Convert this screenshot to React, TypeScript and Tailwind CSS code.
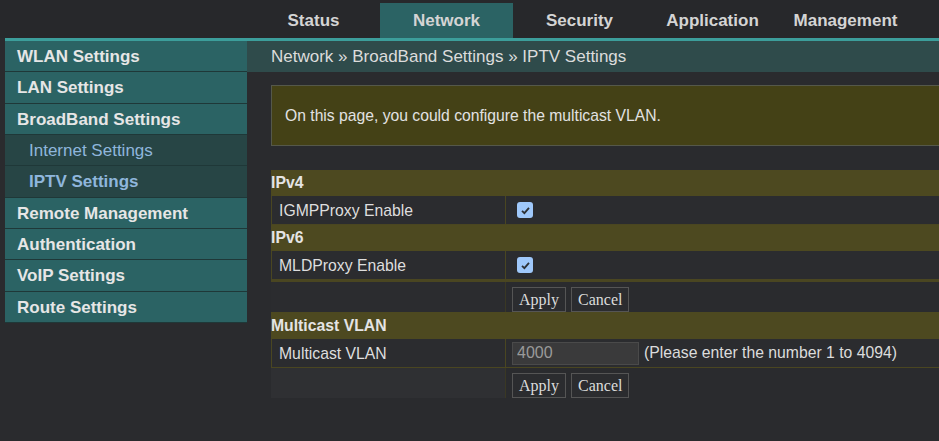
import React from "react";

const TABS = ["Status", "Network", "Security", "Application", "Management"];

const MENU = [
  { label: "WLAN Settings" },
  { label: "LAN Settings" },
  { label: "BroadBand Settings" },
  { label: "Internet Settings", sub: true },
  { label: "IPTV Settings", sub: true, active: true },
  { label: "Remote Management" },
  { label: "Authentication" },
  { label: "VoIP Settings" },
  { label: "Route Settings" },
];

function Check() {
  return (
    <span className="ml-[11px] flex h-[16px] w-[16px] items-center justify-center rounded-[3px] bg-[#9fc8fa]">
      <svg viewBox="0 0 12 12" className="h-[11px] w-[11px]">
        <path d="M2.2 6.4 L4.8 8.9 L9.8 3.2" fill="none" stroke="#2d3135" strokeWidth="2" />
      </svg>
    </span>
  );
}

function Buttons({ shade }: { shade?: boolean }) {
  return (
    <div className="flex h-[30px]">
      <div
        className={
          "w-[235px] border-r border-[#3a3824] " + (shade ? "bg-[#2f3033]" : "bg-[#2b2c2f]")
        }
      />
      <div className="flex items-start gap-[5px] pl-[6px] pt-[5px]">
        <button className="h-[25px] border border-[#555] bg-[#2b2c2f] px-[6px] font-['Liberation_Serif',serif] text-[16px] text-[#dcdcdc]">
          Apply
        </button>
        <button className="h-[25px] border border-[#555] bg-[#2b2c2f] px-[6px] font-['Liberation_Serif',serif] text-[16px] text-[#dcdcdc]">
          Cancel
        </button>
      </div>
    </div>
  );
}

function Head({ title, tall }: { title: string; tall?: boolean }) {
  return (
    <div
      className={
        "flex items-center bg-[#4d4920] text-[15.75px] font-bold text-[#e4e4e4] " +
        (tall ? "h-[27px]" : "h-[26px]")
      }
    >
      {title}
    </div>
  );
}

function Row({ label, children }: { label: string; children: React.ReactNode }) {
  return (
    <div className="flex h-[29px] border-x border-b border-[#4a4621] bg-[#2b2c2f]">
      <div className="flex w-[234px] items-center border-r border-[#4a4621] pl-[7px] pt-[2px] text-[15.75px] text-[#dedede]">
        {label}
      </div>
      <div className="flex flex-1 items-center">{children}</div>
    </div>
  );
}

export default function App() {
  return (
    <div className="h-[441px] w-[939px] overflow-hidden bg-[#2a2b2e] font-['Liberation_Sans',Arial,sans-serif]">
      <div className="flex h-[38px] pl-[247px] pt-[3px] bg-[#27282b]">
        {TABS.map((t) => (
          <div
            key={t}
            className={
              "flex w-[133px] shrink-0 items-center justify-center text-[17px] font-bold text-[#d4d4d4] " +
              (t === "Network" ? "bg-[#2b6364]" : "")
            }
          >
            {t}
          </div>
        ))}
      </div>
      <div className="ml-[5px] h-[3px] bg-[#3c9e9b]" />

      <div className="flex pl-[5px]">
        <aside className="w-[242px] shrink-0">
          {MENU.map((m) => (
            <div
              key={m.label}
              className={
                "flex h-[31.33px] items-center border-b border-[#1f3838] pt-[1px] text-[17px] " +
                (m.sub
                  ? "bg-[#274545] pl-[24px] text-[#8fb6dc] " + (m.active ? "font-bold" : "")
                  : "bg-[#2b6364] pl-[12px] font-bold text-[#e6e6e6]")
              }
            >
              {m.label}
            </div>
          ))}
        </aside>

        <main className="w-[740px] shrink-0">
          <div className="flex h-[31px] items-center bg-[#2f4b4b] pl-[24px] text-[17px] text-[#dcdcdc]">
            Network » BroadBand Settings » IPTV Settings
          </div>
          <div className="pl-[24px]">
            <div className="mt-[13px] flex h-[61px] items-center border border-[#55584a] bg-[#444116] pl-[13px] text-[15.7px] text-[#e2e2e2]">
              On this page, you could configure the multicast VLAN.
            </div>

            <div className="mt-[24px] w-[700px]">
              <Head title="IPv4" />
              <Row label="IGMPProxy Enable">
                <Check />
              </Row>
              <Head title="IPv6" />
              <Row label="MLDProxy Enable">
                <Check />
              </Row>
              <div className="h-[2px] bg-[#4a4621]" />
              <Buttons />
              <Head title="Multicast VLAN" tall />
              <Row label="Multicast VLAN">
                <input
                  readOnly
                  value="4000"
                  className="ml-[6px] h-[23px] w-[127px] border border-[#4a4a4a] bg-[#3a3a3b] pl-[4px] text-[16px] text-[#9a9a9a] outline-none"
                />
                <span className="ml-[5px] text-[15.75px] text-[#dcdcdc]">
                  (Please enter the number 1 to 4094)
                </span>
              </Row>
              <Buttons shade />
            </div>
          </div>
        </main>
      </div>
    </div>
  );
}
